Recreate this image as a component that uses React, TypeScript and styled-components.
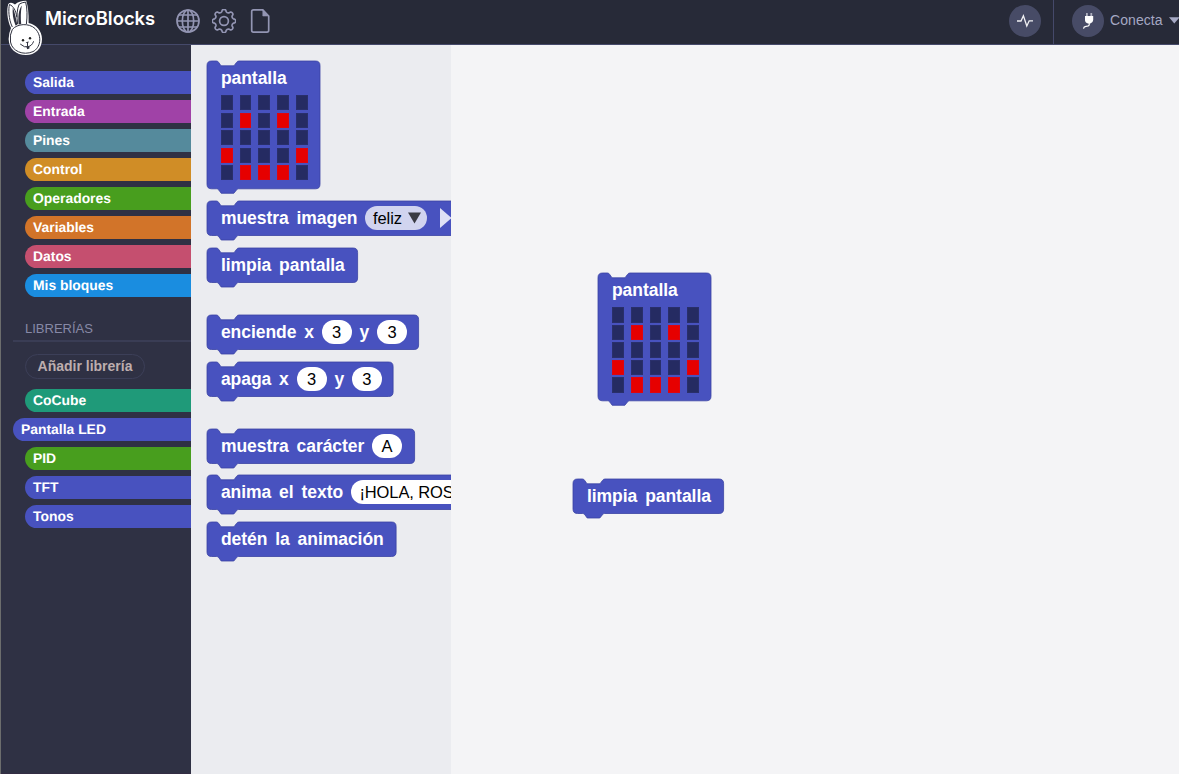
import React from 'react';
import styled, { createGlobalStyle } from 'styled-components';

const GlobalStyle = createGlobalStyle`
  * { box-sizing: border-box; }
  html, body { margin: 0; height: 100%; overflow: hidden; }
  body { font-family: "Liberation Sans", Arial, sans-serif; background: #f4f4f6; }
`;

const Shell = styled.div`
  display: flex;
  flex-direction: column;
  width: 1179px;
  height: 774px;
  overflow: hidden;
  border-left: 1px solid #6c6d6d;
`;

const TopBar = styled.header`
  position: relative;
  z-index: 2;
  display: flex;
  flex: none;
  height: 45px;
  background: #272a38;
  border-bottom: 1px solid #45496a;
`;

const Brand = styled.div`
  display: flex;
  width: 175px;
  height: 57px;
`;

const Rabbit = styled.svg`
  width: 44px;
  height: 57px;
  flex: none;
`;

const BrandName = styled.h1`
  margin: 0;
  padding-top: 7px;
  font: 600 18.4px/22px Inter, sans-serif;
  letter-spacing: 0.02px;
  color: #fff;
  white-space: nowrap;
`;

const Tools = styled.nav`
  display: flex;
  gap: 12px;
  padding-top: 9px;
  svg { width: 24px; height: 24px; fill: none; stroke: #9395b3; stroke-width: 1.7; }
`;

const Connection = styled.div`
  display: flex;
  margin-left: auto;
`;

const RoundSlot = styled.div`
  display: flex;
  width: 45px;
  padding-top: 5px;
  border-right: 1px solid #45496a;
`;

const RoundButton = styled.button`
  display: grid;
  flex: none;
  place-items: center;
  width: 32px;
  height: 32px;
  padding: 0;
  border: 0;
  border-radius: 50%;
  background: #474b66;
  svg { width: 32px; height: 32px; }
`;

const Connect = styled.div`
  display: flex;
  width: 125px;
  padding: 5px 0 0 18px;
`;

const ConnectLabel = styled.span`
  padding: 7px 6.5px 0 6px;
  font-size: 14px;
  letter-spacing: 0.07px;
  line-height: 17px;
  color: #a5a8c3;
`;

const Caret = styled.svg`
  flex: none;
  width: 11px;
  height: 7px;
  margin-top: 12px;
`;

const Body = styled.div`
  display: flex;
  flex: 1;
  min-height: 0;
`;

const Sidebar = styled.aside`
  width: 190px;
  flex: none;
  padding-top: 26px;
  background: #2f3144;
  border-bottom: 1px solid #332c43;
`;

const CategoryList = styled.div`
  display: flex;
  flex-direction: column;
  gap: 6px;
`;

const Category = styled.div<{ $color: string; $selected?: boolean }>`
  height: 23px;
  margin-left: ${p => (p.$selected ? 12 : 24)}px;
  padding-left: 8px;
  border-radius: 11.5px 0 0 11.5px;
  background: ${p => p.$color};
  color: #fff;
  font-weight: bold;
  font-size: 13.9px;
  line-height: 23px;
  text-rendering: geometricPrecision;
`;

const LibraryTitle = styled.h2`
  margin: 21px 0 12px 12px;
  padding: 2px 0 3px 12px;
  height: 24px;
  border-bottom: 2px solid #3a3d55;
  color: #8789a6;
  font-weight: normal;
  font-size: 13px;
  line-height: 17px;
`;

const AddLibrary = styled.button`
  display: block;
  width: 120px;
  height: 25px;
  margin: 0 0 10px 24px;
  padding: 0;
  border: 1px solid #3c3f58;
  border-radius: 13px;
  background: transparent;
  color: #bdaeae;
  font: bold 14px/23px "Liberation Sans", Arial, sans-serif;
`;

const Palette = styled.section`
  display: flex;
  flex-direction: column;
  align-items: flex-start;
  width: 260px;
  flex: none;
  padding: 15.8px 0 0 15.5px;
  overflow: hidden;
  background: #ebecf0;
`;

const Workspace = styled.main`
  position: relative;
  flex: 1;
  background: #f4f4f6;
`;

const Placed = styled.div<{ $x: number; $y: number }>`
  position: absolute;
  left: ${p => p.$x}px;
  top: ${p => p.$y}px;
`;

const BlockBox = styled.div<{ $w: number; $h: number; $gap?: number }>`
  position: relative;
  flex: none;
  width: ${p => p.$w}px;
  height: ${p => p.$h}px;
  margin-bottom: ${p => p.$gap ?? 12.3}px;
  padding-left: 14.4px;
`;

const BlockShape = styled.svg`
  position: absolute;
  left: 0;
  top: 0;
  overflow: visible;
  fill: #4852bf;
  stroke: #3a42a3;
  stroke-width: 0.8;
`;

const BlockRow = styled.div`
  position: relative;
  display: flex;
  align-items: center;
  gap: 7.9px;
  height: 34px;
  white-space: nowrap;
`;

const Word = styled.span`
  color: #fff;
  font-weight: bold;
  font-size: 17.5px;
  letter-spacing: -0.05px;
  line-height: 20px;
`;

const Slot = styled.span<{ $menu?: boolean; $w?: number }>`
  display: flex;
  flex: none;
  align-items: center;
  justify-content: center;
  gap: 6px;
  width: ${p => p.$w ?? 30}px;
  height: 24px;
  margin-left: -0.2px;
  padding-left: ${p => (p.$menu ? 1.5 : 0)}px;
  border-radius: 12px;
  background: ${p => (p.$menu ? '#d1d4ef' : '#fff')};
  color: #000;
  font-size: 16.5px;
  letter-spacing: -0.1px;
  line-height: 20px;
`;

const Leds = styled.div`
  position: relative;
  display: grid;
  grid-template-columns: repeat(5, 11.8px);
  grid-auto-rows: 15.3px;
  gap: 2.2px 7px;
  padding-top: 0.3px;
`;

const Led = styled.i<{ $on: boolean }>`
  background: ${p => (p.$on ? '#e60000' : '#252b62')};
  border: 0.5px solid ${p => (p.$on ? '#de0410' : '#292f6b')};
`;

const FACE = ['.....', '.#.#.', '.....', '#...#', '.###.'];

const polar = (r: number, deg: number) => {
  const a = (deg * Math.PI) / 180;
  return `${(12 + r * Math.cos(a)).toFixed(2)} ${(12 + r * Math.sin(a)).toFixed(2)}`;
};

// Eight rounded teeth joined by concave valleys.
const GEAR = Array.from({ length: 8 }, (_, k) => {
  const a = k * 45;
  return `${k ? 'L' : 'M'}${polar(10.8, a - 10)}A2.2 2.2 0 0 1 ${polar(10.8, a + 10)}L${polar(9.6, a + 13)}A2.6 2.6 0 0 0 ${polar(9.6, a + 32)}`;
}).join('') + 'Z';

function Block({ w, h = 34.5, gap, children }: { w: number; h?: number; gap?: number; children: React.ReactNode }) {
  const r = w - 0.4;
  const d = `M4.5 0H9.5Q11 0 11.8 1.6L14 4.8H27L29.5 1.4Q30.5 0 32 0H${r - 4.5}Q${r} 0 ${r} 4.5V${h - 4.5}Q${r} ${h} ${r - 4.5} ${h}H31.5Q30.2 ${h} 29.5 ${h + 1.2}L26.8 ${h + 4.5}H14.2L11.8 ${h + 1.2}Q11 ${h} 9.5 ${h}H4.5Q0 ${h} 0 ${h - 4.5}V4.5Q0 0 4.5 0Z`;
  return (
    <BlockBox $w={w} $h={h} $gap={gap}>
      <BlockShape width={w} height={h}><path d={d} /></BlockShape>
      {children}
    </BlockBox>
  );
}

function Words({ text }: { text: string }) {
  return <>{text.split(' ').map(t => <Word key={t}>{t}</Word>)}</>;
}

function DisplayBlock() {
  return (
    <Block w={113.4} h={127.8} gap={12.9}>
      <BlockRow><Words text="pantalla" /></BlockRow>
      <Leds>
        {FACE.join('').split('').map((c, i) => <Led key={i} $on={c === '#'} />)}
      </Leds>
    </Block>
  );
}

const CATEGORIES: [string, string][] = [
  ['Salida', '#4852bf'], ['Entrada', '#a042a7'], ['Pines', '#558a9c'], ['Control', '#d08d26'],
  ['Operadores', '#489e1e'], ['Variables', '#d27429'], ['Datos', '#c54f6f'], ['Mis bloques', '#1a8de0'],
];
const LIBRARIES: [string, string][] = [
  ['CoCube', '#1f9a79'], ['Pantalla LED', '#4852bf'], ['PID', '#489e1e'], ['TFT', '#4852bf'], ['Tonos', '#4852bf'],
];

export default function App() {
  return (
    <Shell>
      <GlobalStyle />
      <TopBar>
        <Brand>
          <Rabbit viewBox="1 0 44 57">
            <path d="M11 28C7 20 6.5 9 8.3 4Q11 1.5 15 4.5Q19 .8 26.2 .8Q29 9 28.6 23C36 24.5 42 31 42 39C42 49 35 55 26 55C16 55 9 49 8.6 39Q8.8 33 11 28Z" fill="#fff" />
            <path d="M12.3 27C8.5 19 8.3 9 9.5 4.5C13.5 6 16 11 16.8 17M17.6 24C16.4 16 17 9 19.2 4.2Q22 2.4 25.6 2.1C27.3 8 27.4 16 26.4 24" fill="none" stroke="#30323f" strokeWidth="1" />
            <path d="M15.5 25.5C13 19 12.2 13 12.8 7.5C15 12 15.6 18 17.4 24.8ZM18.6 24.6C18 16 18.6 10 21.8 5.5C20.6 12 20.6 18 21.2 24Z" fill="#30323f" />
            <path d="M12.3 29.5C17 23.6 29 22.8 35 28.5C43 36.5 40 48 33 51.6C23 56 12 51 10.5 42Q9.5 34.5 12.3 29.5Z" fill="#fff" stroke="#30323f" strokeWidth="1" />
            <circle cx="23" cy="40.2" r="1.2" fill="#222" /><circle cx="30" cy="38.3" r="1.2" fill="#222" />
            <path d="M20.2 44Q25 48.2 28 46.6Q32 46 33.6 41.3M27.5 43V46.5" fill="none" stroke="#30323f" strokeWidth="1" />
            <path d="M25.6 42.3L29 41.4L27.7 43.6ZM26.4 47L29.4 46.2V48.6L27.2 49.2Z" fill="#30323f" />
          </Rabbit>
          <BrandName>MicroBlocks</BrandName>
        </Brand>
        <Tools>
          <svg viewBox="0 0 24 24"><circle cx="12" cy="12" r="11" /><ellipse cx="12" cy="12" rx="5.7" ry="11" /><path d="M12 1V23M1 12H23M2.7 6H21.3M2.7 18H21.3" /></svg>
          <svg viewBox="0 0 24 24"><circle cx="12" cy="12" r="4.4" /><path d={GEAR} strokeLinejoin="round" /></svg>
          <svg viewBox="0 0 24 24"><path d="M5.5 .9H14.8L20.7 7V21.3Q20.7 23.1 19 23.1H5.3Q3.7 23.1 3.7 21.3V2.6Q3.7 .9 5.5 .9Z" /><path d="M14.8 1V7H20.7Z" fill="#9395b3" strokeWidth=".6" /></svg>
        </Tools>
        <Connection>
          <RoundSlot>
            <RoundButton>
              <svg viewBox="0 0 32 32"><path d="M8 16H12L14.4 10.7L17.8 21L20.2 15.8H24" fill="none" stroke="#f1f1f4" strokeWidth="1.3" /></svg>
            </RoundButton>
          </RoundSlot>
          <Connect>
            <RoundButton>
              <svg viewBox="0 0 32 32"><path d="M14 8H15.8V11H14ZM18.4 8H20.2V11H18.4Z" fill="#aeb0bf" /><path d="M13 11H21.2V15Q21 18 18.3 18.6H16Q13 17.8 13 15Z" fill="#fff" /><path d="M17.2 18V20Q16.8 21.3 14 21.3Q11.8 21.5 11.5 23.7" fill="none" stroke="#fff" strokeWidth="1.2" /></svg>
            </RoundButton>
            <ConnectLabel>Conecta</ConnectLabel>
            <Caret viewBox="0 0 11 7"><path d="M0 .3H10.6L5.3 6.5Z" fill="#a5a8c3" /></Caret>
          </Connect>
        </Connection>
      </TopBar>
      <Body>
        <Sidebar>
          <CategoryList>
            {CATEGORIES.map(([n, c]) => <Category key={n} $color={c}>{n}</Category>)}
          </CategoryList>
          <LibraryTitle>LIBRERÍAS</LibraryTitle>
          <AddLibrary>Añadir librería</AddLibrary>
          <CategoryList>
            {LIBRARIES.map(([n, c]) => <Category key={n} $color={c} $selected={n === 'Pantalla LED'}>{n}</Category>)}
          </CategoryList>
        </Sidebar>
        <Palette>
          <DisplayBlock />
          <Block w={275}>
            <BlockRow>
              <Words text="muestra imagen" />
              <Slot $menu $w={62}>feliz<svg width="13" height="12"><path d="M0 .5H13L6.5 11.5Z" fill="#3a3b44" /></svg></Slot>
              <svg width="12" height="20" style={{ marginLeft: 5 }}><path d="M0 0L11.5 10L0 20Z" fill="#dfe1f5" /></svg>
            </BlockRow>
          </Block>
          <Block w={151} gap={32.3}><BlockRow><Words text="limpia pantalla" /></BlockRow></Block>
          <Block w={212}><BlockRow><Words text="enciende x" /><Slot>3</Slot><Words text="y" /><Slot>3</Slot></BlockRow></Block>
          <Block w={186.5} gap={32.3}><BlockRow><Words text="apaga x" /><Slot>3</Slot><Words text="y" /><Slot>3</Slot></BlockRow></Block>
          <Block w={208}><BlockRow><Words text="muestra carácter" /><Slot>A</Slot></BlockRow></Block>
          <Block w={275}><BlockRow><Words text="anima el texto" /><Slot $w={127}>¡HOLA, ROSA!</Slot></BlockRow></Block>
          <Block w={189.5}><BlockRow><Words text="detén la animación" /></BlockRow></Block>
        </Palette>
        <Workspace>
          <Placed $x={146.6} $y={228}><DisplayBlock /></Placed>
          <Placed $x={121.6} $y={434}><Block w={151}><BlockRow><Words text="limpia pantalla" /></BlockRow></Block></Placed>
        </Workspace>
      </Body>
    </Shell>
  );
}
